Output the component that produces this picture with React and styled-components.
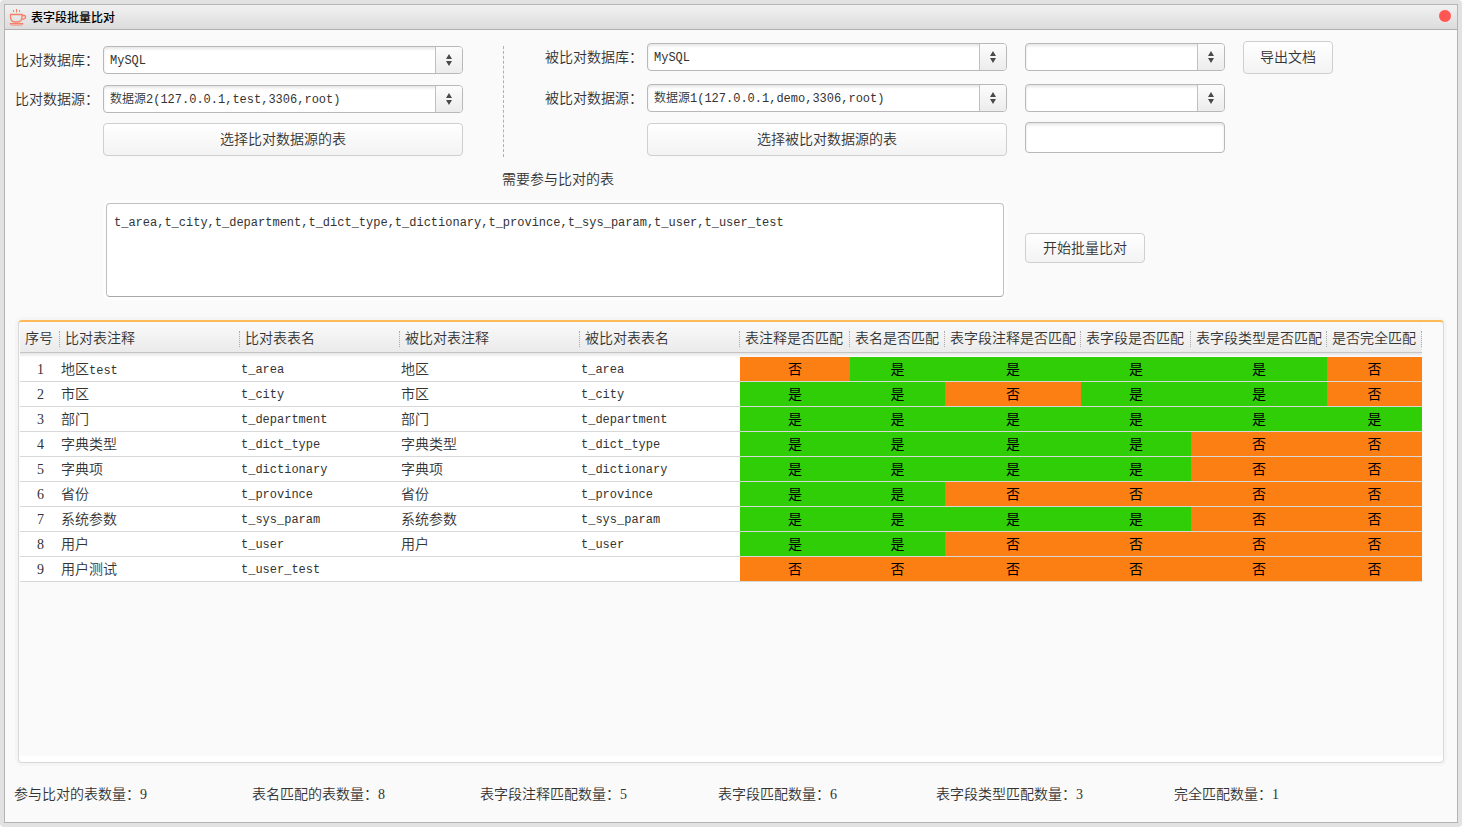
import React, { useState } from 'react'
import styled, { createGlobalStyle } from 'styled-components'

const columns = [
  { title: '序号', width: 40 },
  { title: '比对表注释', width: 180 },
  { title: '比对表表名', width: 160 },
  { title: '被比对表注释', width: 180 },
  { title: '被比对表表名', width: 160 },
  { title: '表注释是否匹配', width: 110 },
  { title: '表名是否匹配', width: 95 },
  { title: '表字段注释是否匹配', width: 136 },
  { title: '表字段是否匹配', width: 110 },
  { title: '表字段类型是否匹配', width: 136 },
  { title: '是否完全匹配', width: 95 },
]

// matches: one char per match column, 1 = 是, 0 = 否
const rows = [
  { comment: '地区', suffix: 'test', name: 't_area', toComment: '地区', toName: 't_area', matches: '011110' },
  { comment: '市区', name: 't_city', toComment: '市区', toName: 't_city', matches: '110110' },
  { comment: '部门', name: 't_department', toComment: '部门', toName: 't_department', matches: '111111' },
  { comment: '字典类型', name: 't_dict_type', toComment: '字典类型', toName: 't_dict_type', matches: '111100' },
  { comment: '字典项', name: 't_dictionary', toComment: '字典项', toName: 't_dictionary', matches: '111100' },
  { comment: '省份', name: 't_province', toComment: '省份', toName: 't_province', matches: '110000' },
  { comment: '系统参数', name: 't_sys_param', toComment: '系统参数', toName: 't_sys_param', matches: '111100' },
  { comment: '用户', name: 't_user', toComment: '用户', toName: 't_user', matches: '110000' },
  { comment: '用户测试', name: 't_user_test', toComment: '', toName: '', matches: '000000' },
]

const stats = [
  { label: '参与比对的表数量：', value: 9, width: 238 },
  { label: '表名匹配的表数量：', value: 8, width: 228 },
  { label: '表字段注释匹配数量：', value: 5, width: 238 },
  { label: '表字段匹配数量：', value: 6, width: 218 },
  { label: '表字段类型匹配数量：', value: 3, width: 238 },
  { label: '完全匹配数量：', value: 1, width: 238 },
]

function CupIcon() {
  return (
    <svg width="18" height="18" viewBox="0 0 18 18" fill="none" stroke="#f77f68" aria-hidden="true">
      <path d="M4.500 2v2M7.500 1v3.500M10.500 2v2" />
      <path d="M1.500 6.500h11.500v2.500c0 3.200-2.200 5-4.800 5H6.300c-2.600 0-4.800-1.800-4.800-5z" strokeWidth="1.3" />
      <path d="M13 7.500h2c1.100 0 1.600.4 1.600 1.200 0 1.600-1.600 2.500-4.100 2.500" strokeWidth="1.3" />
      <path d="M1 15.500c.3 1 .8 1.500 1.700 1.500h9.600c1 0 1.500-.5 1.700-1.500z" />
    </svg>
  )
}

function Combo({ id, options, label }) {
  return (
    <ComboBox>
      <select id={id} aria-label={label}>
        {options.map((item) => <option key={item}>{item}</option>)}
      </select>
      <ComboArrow>
        <svg width="6" height="12" viewBox="0 0 6 12" fill="#4a4a4a" aria-hidden="true">
          <path d="M3 0L6 5H0zM3 12L6 7H0z" />
        </svg>
      </ComboArrow>
    </ComboBox>
  )
}

function App() {
  const [tables, setTables] = useState(rows.map((item) => item.name).join(','));
  const [keyword, setKeyword] = useState('');
  return (
    <Frame>
      <GlobalStyle />
      <Window>
        <TitleBar>
          <CupIcon />
          <h1>表字段批量比对</h1>
          <CloseButton type="button" aria-label="关闭" />
        </TitleBar>
        <Form>
          <Fields $basis="448px" $label="88px" $rows="39px 38px 33px" $top="16px">
            <label htmlFor="fromDb">比对数据库：</label>
            <Combo id="fromDb" options={['MySQL']} />
            <label htmlFor="fromSource">比对数据源：</label>
            <Combo id="fromSource" options={['数据源2(127.0.0.1,test,3306,root)']} />
            <Button type="button">选择比对数据源的表</Button>
          </Fields>
          <Divider />
          <Fields $basis="462px" $label="102px" $rows="41px 39px 33px" $top="13px">
            <label htmlFor="toDb">被比对数据库：</label>
            <Combo id="toDb" options={['MySQL']} />
            <label htmlFor="toSource">被比对数据源：</label>
            <Combo id="toSource" options={['数据源1(127.0.0.1,demo,3306,root)']} />
            <Button type="button">选择被比对数据源的表</Button>
          </Fields>
          <Extras>
            <Combo label="数据库名" options={['']} />
            <Combo label="表分类" options={['']} />
            <TextInput aria-label="关键字" value={keyword} onChange={(e) => setKeyword(e.target.value)} />
          </Extras>
          <ExportButton type="button">导出文档</ExportButton>
        </Form>
        <Compare>
          <TablesField>
            <label htmlFor="tables">需要参与比对的表</label>
            <textarea id="tables" value={tables} onChange={(e) => setTables(e.target.value)} />
          </TablesField>
          <StartButton type="button">开始批量比对</StartButton>
        </Compare>
        <Panel>
          <ResultTable>
            <colgroup>
              {columns.map((col) => <col key={col.title} width={col.width} />)}
            </colgroup>
            <thead>
              <tr>
                {columns.map((col) => <th key={col.title} scope="col"><span>{col.title}</span></th>)}
              </tr>
            </thead>
            <tbody>
              {rows.map((row, ind) => (
                <tr key={row.name}>
                  <IndexCell>{ind + 1}</IndexCell>
                  <Cell>{row.comment}{row.suffix && <Mono>{row.suffix}</Mono>}</Cell>
                  <NameCell>{row.name}</NameCell>
                  <Cell>{row.toComment}</Cell>
                  <NameCell>{row.toName}</NameCell>
                  {row.matches.split('').map((flag, i) => (
                    <MatchCell key={i} $ok={flag === '1'}>{flag === '1' ? '是' : '否'}</MatchCell>
                  ))}
                </tr>
              ))}
            </tbody>
          </ResultTable>
        </Panel>
        <Stats>
          {stats.map((item) => (
            <Stat key={item.label} $width={item.width}>{item.label}{item.value}</Stat>
          ))}
        </Stats>
      </Window>
    </Frame>
  )
}

const songti = `"Liberation Serif", "Noto Sans CJK SC", serif`;
const mono = `"Liberation Mono", "Noto Sans CJK SC", monospace`;

const GlobalStyle = createGlobalStyle`
  *{ box-sizing:border-box; }
  body{
    margin:0; background-color:#fff; color:#333;
    font-family:${songti}; font-size:14px; font-weight:350; line-height:20px;
  }
  button,input,select,textarea{ font:inherit; color:inherit; margin:0; }
`;
const Frame = styled.div`
  min-height:100vh;
  display:flex; flex-direction:column;
  padding:4px;
  background-color:#e2e2e2;
  border-radius:4px;
`;
const Window = styled.main`
  flex:1;
  display:flex; flex-direction:column;
  border:1px solid #b5b5b5;
  background-color:#fafafa;
`;
const TitleBar = styled.header`
  display:flex; align-items:center;
  height:25px; padding:0 5px 0 4px;
  background:linear-gradient(#f1f1f1,#dcdcdc);
  border-bottom:1px solid #b0b0b0;
  h1{
    flex:1; margin:0 0 0 4px;
    color:#000; font-family:"Noto Sans CJK SC", sans-serif;
    font-size:12px; font-weight:500; line-height:20px;
  }
`;
const CloseButton = styled.button`
  width:14px; height:14px; padding:0;
  margin-bottom:2px;
  border:1px solid #f6f0f0; border-radius:50%;
  background-color:#ff5753;
`;
const Form = styled.div`
  display:flex; align-items:flex-start;
  padding:0 10px;
`;
const Button = styled.button`
  height:33px; padding:0 16px;
  border:1px solid #cfcfcf; border-radius:4px;
  background:linear-gradient(#fff,#f3f3f3);
  white-space:nowrap;
`;
const Fields = styled.div`
  flex:0 1 ${(p) => p.$basis};
  display:grid;
  grid-template-columns:${(p) => p.$label} minmax(0,1fr);
  grid-template-rows:${(p) => p.$rows};
  align-items:start;
  padding-top:${(p) => p.$top};
  label{ line-height:30px; white-space:nowrap; }
  ${Button}{ grid-column:2; }
`;
const Divider = styled.div`
  height:111px;
  margin:16px 41px 0 40px;
  border-left:1px dashed #b0b0b0;
`;
const ComboBox = styled.div`
  display:flex;
  height:28px;
  border:1px solid #b8b8b8; border-radius:4px;
  background-color:#fff;
  box-shadow:inset 0 2px 3px #e6e6e6;
  overflow:hidden;
  select{
    flex:1; min-width:0; padding:2px 6px 0;
    border:0; outline:0; appearance:none;
    background:transparent;
    font-family:${mono}; font-size:12px;
  }
`;
const ComboArrow = styled.span`
  width:27px;
  display:flex; align-items:center; justify-content:center;
  border-left:1px solid #c0c0c0;
  background:linear-gradient(#fcfcfc,#ececec);
  pointer-events:none;
`;
const Extras = styled.div`
  flex:0 1 200px;
  display:grid;
  grid-template-rows:41px 38px 31px;
  align-items:start;
  margin-left:18px; padding-top:13px;
`;
const TextInput = styled.input`
  width:100%; height:31px; padding:0 6px;
  border:1px solid #b8b8b8; border-radius:4px;
  background-color:#fff;
  box-shadow:inset 0 2px 3px #e6e6e6;
`;
const ExportButton = styled(Button)`
  margin:11px 0 0 18px;
`;
const Compare = styled.div`
  display:flex; align-items:flex-end;
  padding:13px 10px 0 98px;
`;
const TablesField = styled.div`
  flex:0 1 904px;
  display:flex; flex-direction:column;
  label{ padding-left:6px; text-align:center; }
  textarea{
    height:94px; margin:13px 3px 0; padding:11px 7px;
    border:1px solid #c0c0c0; border-bottom-color:#a8a8a8; border-radius:4px;
    outline:0; resize:none;
    background-color:#fff;
    box-shadow:0 0 0 3px #fdfdfd;
    font-family:${mono}; font-size:12px; line-height:16px;
  }
`;
const StartButton = styled(Button)`
  height:30px; padding:2px 17px 0;
  margin:0 0 34px 18px;
`;
const Panel = styled.section`
  flex:1;
  margin:23px 13px 0; padding:0 21px 0 1px;
  border:1px solid #d8d8d8; border-top:2px solid #ffb957; border-radius:4px;
  box-shadow:0 0 0 3px #f5f5f5, inset 0 -6px 0 #fff;
`;
const ResultTable = styled.table`
  width:100%;
  table-layout:fixed; border-spacing:0;
  th{
    height:35px; padding:2px 0 3px;
    background:linear-gradient(#fafafa,#ebebeb 30px,#c5c5c5 30px,#c5c5c5 31px,#e4e4e4 31px,#fdfdfd);
    font-weight:350; text-align:left;
  }
  th span{
    display:block; height:16px;
    padding-left:5px;
    border-right:1px dotted #aaa;
    line-height:16px; white-space:nowrap;
  }
`;
const Cell = styled.td`
  height:25px; padding:2px 0 0 1px;
  background-color:#fff;
  border-bottom:1px solid #d8d8d8;
  white-space:nowrap;
`;
const IndexCell = styled(Cell)`
  text-align:center;
`;
const NameCell = styled(Cell)`
  font-family:${mono}; font-size:12px;
`;
const Mono = styled.span`
  font-family:${mono}; font-size:12px;
`;
const MatchCell = styled(Cell)`
  padding-left:0;
  background-color:${(p) => (p.$ok ? '#2fce07' : '#fb7f12')};
  color:#000; font-weight:400; text-align:center;
`;
const Stats = styled.footer`
  display:flex;
  padding:22px 9px 17px;
`;
const Stat = styled.div`
  flex:0 1 ${(p) => p.$width}px;
  white-space:nowrap;
`;
export default App
